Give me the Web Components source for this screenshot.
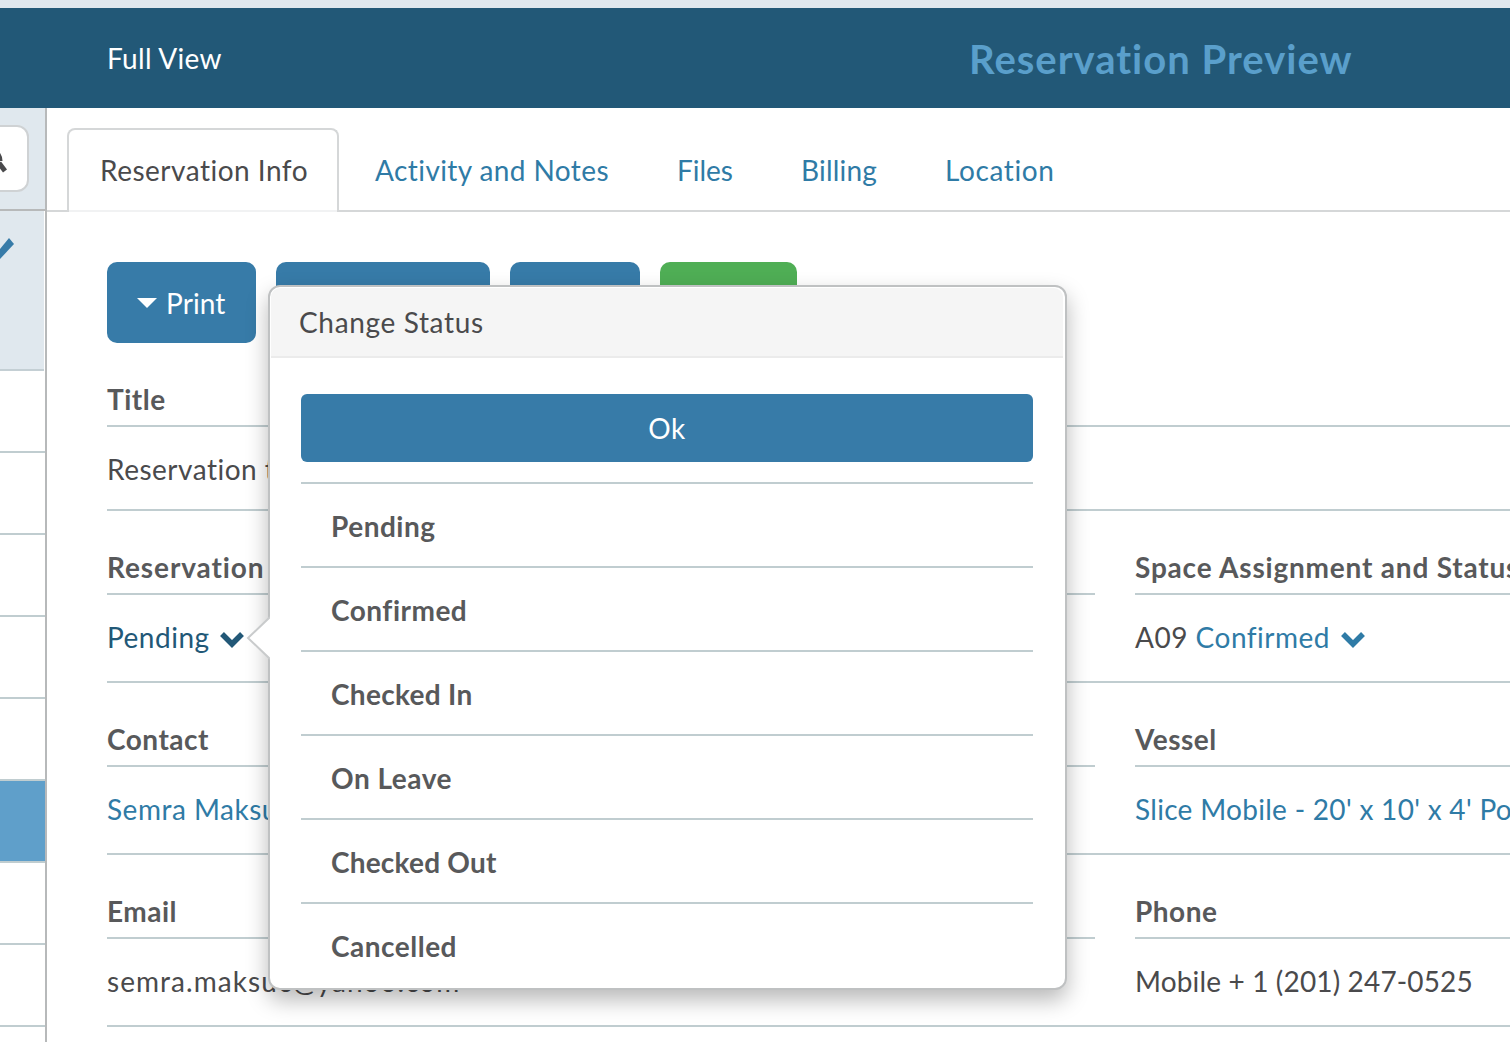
<!DOCTYPE html>
<html>
<head>
<meta charset="utf-8">
<title>Reservation Preview</title>
<style>
  html, body { margin: 0; height: 1042px; overflow: hidden; background: #fff; }
  body { font-family: "Lato", "Noto Sans", sans-serif; font-size: 28px; letter-spacing: .5px; color: #4a4a4c; position: relative; }
  .wrap { display: flex; height: 934px; }
</style>
</head>
<body>
<top-bar heading="Reservation Preview">Full View</top-bar>
<div class="wrap">
  <side-rail></side-rail>
  <main-pane>
    <tab-bar>
      <tab-item active>Reservation Info</tab-item>
      <tab-item style="letter-spacing:.4px">Activity and Notes</tab-item>
      <tab-item style="letter-spacing:0">Files</tab-item>
      <tab-item style="letter-spacing:.2px">Billing</tab-item>
      <tab-item style="letter-spacing:.6px">Location</tab-item>
    </tab-bar>
    <action-row></action-row>
    <info-row short wide>
      <span slot="label">Title</span>
      <span slot="value">Reservation title</span>
    </info-row>
    <info-row>
      <span slot="label" style="letter-spacing:.9px">Reservation Status</span>
      <span slot="label">Reservation Type</span>
      <span slot="label" style="letter-spacing:.8px">Space Assignment and Status</span>
      <span slot="value"><status-link dark>Pending</status-link></span>
      <span slot="value"></span>
      <span slot="value">A09 <status-link>Confirmed</status-link></span>
    </info-row>
    <info-row>
      <span slot="label">Contact</span>
      <span slot="label">Dates</span>
      <span slot="label">Vessel</span>
      <span slot="value" style="color:#2f7ba6">Semra Maksuc</span>
      <span slot="value"></span>
      <span slot="value" style="color:#2f7ba6;letter-spacing:.3px">Slice Mobile - 20' x 10' x 4' Power Boat</span>
    </info-row>
    <info-row>
      <span slot="label">Email</span>
      <span slot="label">Balance</span>
      <span slot="label">Phone</span>
      <span slot="value" style="letter-spacing:1.05px">semra.maksuc@yahoo.com</span>
      <span slot="value"></span>
      <span slot="value" style="letter-spacing:.15px">Mobile + 1 (201) 247-0525</span>
    </info-row>
  </main-pane>
</div>
<status-popover heading="Change Status">
  <status-option>Pending</status-option>
  <status-option>Confirmed</status-option>
  <status-option style="letter-spacing:.3px">Checked In</status-option>
  <status-option>On Leave</status-option>
  <status-option style="letter-spacing:.2px">Checked Out</status-option>
  <status-option last>Cancelled</status-option>
</status-popover>

<script>
class TopBar extends HTMLElement {
  constructor() {
    super();
    const shadow = this.attachShadow({ mode: "open" });
    shadow.innerHTML = `
      <style>
        :host { display: block; border-top: 8px solid #e0e8ee; background: #225877; height: 100px; }
        .in { display: flex; align-items: center; height: 100%; padding-left: 107px; }
        .view { width: 862px; color: #fff; font-size: 28px; letter-spacing: .3px; }
        h1 { margin: 2px 0 0; font-size: 40px; letter-spacing: 1px; font-weight: 700; color: #5a9fcb; white-space: nowrap; }
      </style>
      <div class="in">
        <div class="view"><slot></slot></div>
        <h1></h1>
      </div>
    `;
    shadow.querySelector("h1").textContent = this.getAttribute("heading");
  }
}
customElements.define("top-bar", TopBar);

class SideRail extends HTMLElement {
  constructor() {
    super();
    const shadow = this.attachShadow({ mode: "open" });
    shadow.innerHTML = `
      <style>
        :host { display: block; flex: none; width: 45px; border-right: 2px solid #b7b9ba; overflow: hidden; }
        .search { height: 101px; background: #e0e8ee; border-bottom: 2px solid #b7b9ba; display: flex; align-items: flex-start; }
        .box { flex: none; box-sizing: border-box; width: 48px; height: 67px; margin: 17px 0 0 -19px; background: #fff; border: 2px solid #cfd2d4; border-radius: 12px; position: relative; }
        .box svg { position: absolute; left: 17px; top: 26px; }
        .cur { height: 131px; padding-top: 27px; margin-right: 1px; background: #e0e8ee; border-bottom: 2px solid #c4cfd4; }
        .cur svg { display: block; }
        .row { height: 80px; border-bottom: 2px solid #c0cdd0; }
        .row.on { background: #5f9fca; border-top: 2px solid #c0cdd0; margin-top: -2px; }
      </style>
      <div class="search">
        <div class="box">
          <svg width="8" height="22" viewBox="0 0 8 22"><path d="M-1 10 L5 18" fill="none" stroke="#4a4a4c" stroke-width="5"/><path d="M-1 1 Q1 4 1 8" fill="none" stroke="#4a4a4c" stroke-width="3"/></svg>
        </div>
      </div>
      <div class="cur">
        <svg width="16" height="22" viewBox="0 0 16 22"><path d="M9 0 L14 6 L0 21 L0 11 Z" fill="#377ba8"/></svg>
      </div>
      <div class="row"></div>
      <div class="row"></div>
      <div class="row"></div>
      <div class="row"></div>
      <div class="row"></div>
      <div class="row on"></div>
      <div class="row"></div>
      <div class="row"></div>
    `;
  }
}
customElements.define("side-rail", SideRail);

class MainPane extends HTMLElement {
  constructor() {
    super();
    this.attachShadow({ mode: "open" }).innerHTML = `
      <style>
        :host { display: block; flex: 1; min-width: 0; overflow: hidden; }
      </style>
      <slot></slot>
    `;
  }
}
customElements.define("main-pane", MainPane);

class TabBar extends HTMLElement {
  constructor() {
    super();
    this.attachShadow({ mode: "open" }).innerHTML = `
      <style>
        :host { display: flex; gap: 4px; height: 84px; box-sizing: border-box; margin-top: 20px; padding-left: 20px; border-bottom: 2px solid #d5d7d8; }
      </style>
      <slot></slot>
    `;
  }
}
customElements.define("tab-bar", TabBar);

class TabItem extends HTMLElement {
  constructor() {
    super();
    this.attachShadow({ mode: "open" }).innerHTML = `
      <style>
        :host { display: block; box-sizing: border-box; height: 84px; padding: 0 30px; line-height: 80px; white-space: nowrap; color: #2f7ba6; border: 2px solid transparent; border-bottom: 0; border-radius: 8px 8px 0 0; }
        :host([active]) { padding-left: 31px; padding-right: 29px; color: #4a4a4c; background: #fff; border-color: #d5d7d8; box-shadow: inset 0 -2px 0 #f1f2f3; }
      </style>
      <slot></slot>
    `;
  }
}
customElements.define("tab-item", TabItem);

class ActionRow extends HTMLElement {
  constructor() {
    super();
    this.attachShadow({ mode: "open" }).innerHTML = `
      <style>
        :host { display: flex; gap: 20px; margin: 50px 0 0 60px; height: 81px; }
        .btn { box-sizing: border-box; height: 81px; background: #377ba8; border-radius: 10px; color: #fff; display: flex; align-items: center; }
        .print { width: 149px; padding-left: 30px; gap: 9px; letter-spacing: .1px; }
        .caret { width: 0; height: 0; border: 10px solid transparent; border-top-color: #fff; border-bottom: 0; }
        .b2 { width: 214px; } .b3 { width: 130px; } .b4 { width: 137px; background: #4fae55; }
      </style>
      <div class="btn print"><i class="caret"></i>Print</div>
      <div class="btn b2"></div>
      <div class="btn b3"></div>
      <div class="btn b4"></div>
    `;
  }
}
customElements.define("action-row", ActionRow);

class InfoRow extends HTMLElement {
  constructor() {
    super();
    this.attachShadow({ mode: "open" }).innerHTML = `
      <style>
        :host { display: block; margin-left: 60px; white-space: nowrap; }
        .labels, .values { display: grid; grid-template-columns: repeat(3, 474px); column-gap: 40px; }
        :host([wide]) .labels, :host([wide]) .values { grid-template-columns: 1fr; }
        .labels ::slotted(*) { display: block; box-sizing: border-box; height: 84px; padding-top: 39px; line-height: 34px; font-weight: 700; color: #58595b; border-bottom: 2px solid #c0cdd0; }
        .values { height: 88px; box-sizing: border-box; border-bottom: 2px solid #c0cdd0; }
        :host([short]) .values { height: 84px; }
        .values ::slotted(*) { display: block; line-height: 85px; }
      </style>
      <div class="labels"><slot name="label"></slot></div>
      <div class="values"><slot name="value"></slot></div>
    `;
  }
}
customElements.define("info-row", InfoRow);

class StatusLink extends HTMLElement {
  constructor() {
    super();
    this.attachShadow({ mode: "open" }).innerHTML = `
      <style>
        :host { color: #2f7ba6; }
        :host([dark]) { color: #225877; }
        svg { margin-left: 2px; vertical-align: 0; }
      </style>
      <slot></slot>
      <svg width="26" height="18" viewBox="0 0 26 18"><path d="M3 4 L13 14 L23 4" fill="none" stroke="currentColor" stroke-width="5.5"/></svg>
    `;
  }
}
customElements.define("status-link", StatusLink);

class StatusPopover extends HTMLElement {
  constructor() {
    super();
    const shadow = this.attachShadow({ mode: "open" });
    shadow.innerHTML = `
      <style>
        :host { display: block; position: absolute; left: 268px; top: 285px; width: 799px; height: 705px; box-sizing: border-box; background: #fff; border: 2px solid #bfc1c2; border-radius: 12px; box-shadow: 0 10px 22px rgba(0,0,0,.28); }
        .arrow { position: absolute; left: -24px; top: 329px; display: block; }
        header { height: 70px; box-sizing: border-box; line-height: 68px; margin: 1px 2px 0 1px; padding-left: 28px; letter-spacing: .65px; background: #f5f5f5; border-bottom: 2px solid #ebebeb; border-radius: 9px 9px 0 0; }
        .body { padding: 36px 32px 0 31px; }
        .ok { height: 68px; line-height: 68px; text-align: center; color: #fff; background: #377ba8; border-radius: 6px; margin-bottom: 20px; }
        .list { border-top: 2px solid #c0cdd0; }
      </style>
      <svg class="arrow" width="24" height="44" viewBox="0 0 24 44"><path d="M24 1 L2 22 L24 43" fill="#fff" stroke="#c9cbcc" stroke-width="2"/></svg>
      <header></header>
      <div class="body">
        <div class="ok">Ok</div>
        <div class="list"><slot></slot></div>
      </div>
    `;
    shadow.querySelector("header").textContent = this.getAttribute("heading");
  }
}
customElements.define("status-popover", StatusPopover);

class StatusOption extends HTMLElement {
  constructor() {
    super();
    this.attachShadow({ mode: "open" }).innerHTML = `
      <style>
        :host { display: block; box-sizing: border-box; height: 84px; line-height: 84px; padding-left: 30px; font-weight: 700; color: #58595b; border-bottom: 2px solid #c0cdd0; }
        :host([last]) { border-bottom: 0; }
      </style>
      <slot></slot>
    `;
  }
}
customElements.define("status-option", StatusOption);
</script>
</body>
</html>
